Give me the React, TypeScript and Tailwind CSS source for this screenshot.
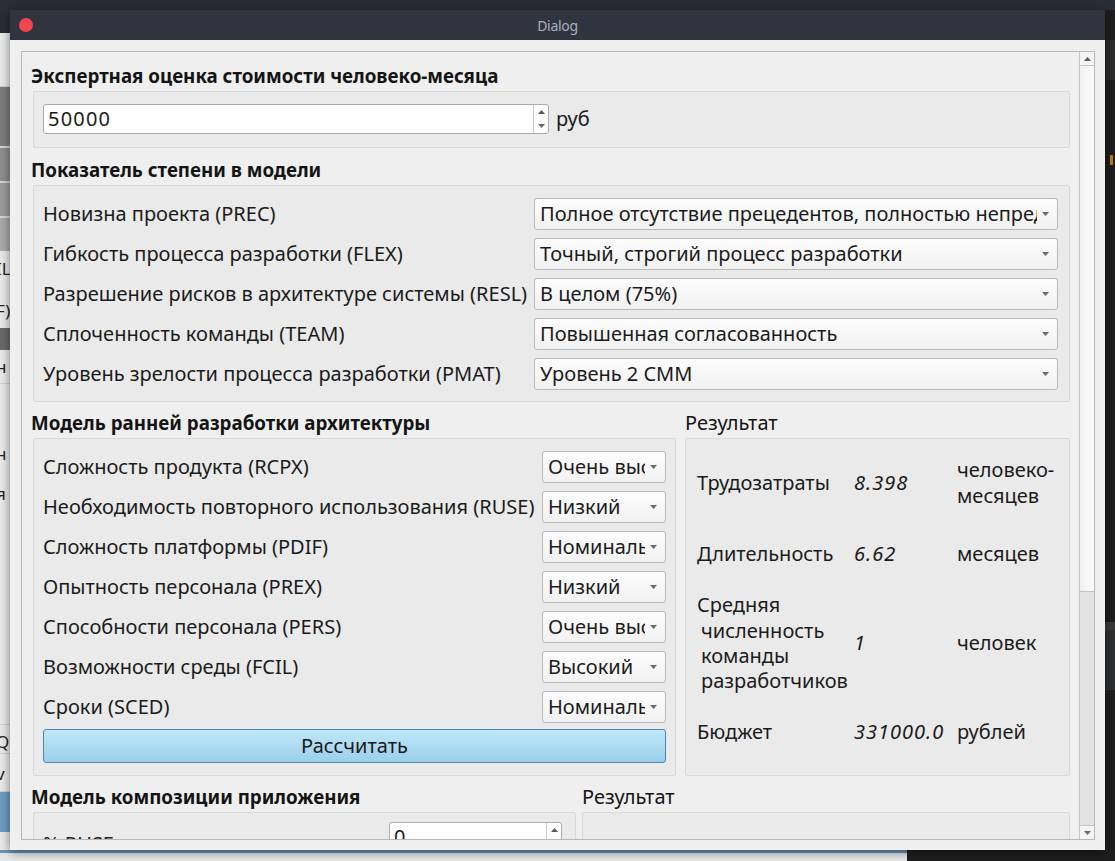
import React from "react";

const pmRows: [string, string][] = [
  ["Новизна проекта (PREC)", "Полное отсутствие прецедентов, полностью непредсказуемый проект"],
  ["Гибкость процесса разработки (FLEX)", "Точный, строгий процесс разработки"],
  ["Разрешение рисков в архитектуре системы (RESL)", "В целом (75%)"],
  ["Сплоченность команды (TEAM)", "Повышенная согласованность"],
  ["Уровень зрелости процесса разработки (PMAT)", "Уровень 2 CMM"],
];

const earlyRows: [string, string][] = [
  ["Сложность продукта (RCPX)", "Очень высокий"],
  ["Необходимость повторного использования (RUSE)", "Низкий"],
  ["Сложность платформы (PDIF)", "Номинальный"],
  ["Опытность персонала (PREX)", "Низкий"],
  ["Способности персонала (PERS)", "Очень высокий"],
  ["Возможности среды (FCIL)", "Высокий"],
  ["Сроки (SCED)", "Номинальный"],
];

function Arrow({ up = false, className = "" }: { up?: boolean; className?: string }) {
  return (
    <svg width="7" height="4" viewBox="0 0 7 4" className={className}>
      {up ? <path d="M0 4 L3.5 0 L7 4 Z" fill="#5a5a5a" /> : <path d="M0 0 L7 0 L3.5 4 Z" fill="#6a6a6a" />}
    </svg>
  );
}

function Combo({ value, className = "" }: { value: string; className?: string }) {
  return (
    <div
      className={`h-[32px] min-w-0 flex items-center border border-[#b9b9b9] rounded-[3px] bg-gradient-to-b from-[#fdfdfd] to-[#f1f1f1] pl-[5px] pr-[8px] ${className}`}
    >
      <span className="flex-1 min-w-0 overflow-hidden whitespace-nowrap text-[#1b1b1b]">{value}</span>
      <Arrow className="ml-[5px] shrink-0" />
    </div>
  );
}

function SpinBox({ value, className = "" }: { value: string; className?: string }) {
  return (
    <div className={`flex border border-[#ababab] rounded-[3px] bg-white ${className}`}>
      <div className="flex-1 flex items-center pl-[4px] text-[#1b1b1b] tracking-[1.2px]">{value}</div>
      <div className="w-[15px] border-l border-[#c9c9c9] flex flex-col">
        <div className="flex-1 flex items-center justify-center">
          <Arrow up />
        </div>
        <div className="flex-1 flex items-center justify-center">
          <Arrow />
        </div>
      </div>
    </div>
  );
}

function Header({ children, bold = true }: { children: React.ReactNode; bold?: boolean }) {
  return (
    <div
      className={`h-[24px] leading-[24px] -ml-[2px] text-[#141414] whitespace-nowrap ${bold ? "font-bold text-[18.75px]" : ""}`}
    >
      {children}
    </div>
  );
}

export default function App() {
  return (
    <div className="relative w-[1115px] h-[861px] overflow-hidden bg-[#1e1e1e] font-['Noto_Sans',sans-serif] text-[20px]">
      {/* desktop behind the dialog */}
      <div className="absolute left-0 top-0 w-[1115px] h-[10px] bg-[#2b2e36]" />
      <div className="absolute left-0 top-[10px] w-[10px] h-[840px] bg-[#ebebeb] overflow-hidden text-[17px] text-[#222]">
        <div className="h-[23px] bg-[#2b2e36]" />
        <div className="h-[54px] border-b border-[#cfcfcf]" />
        <div className="h-[61px] bg-[#7f7f7f] border-b-2 border-[#d8d8d8]" />
        <div className="h-[35px] bg-[#8e8e8e] border-b-2 border-[#d8d8d8]" />
        <div className="h-[35px] bg-[#9c9c9c] border-b-2 border-[#d8d8d8]" />
        <div className="h-[33px] bg-[#ababab]" />
        <div className="h-[42px] leading-[36px] -ml-[4px]">IL</div>
        <div className="h-[35px] leading-[35px] -ml-[4px]">F)</div>
        <div className="h-[22px] bg-[#6a6a6a]" />
        <div className="h-[34px] leading-[34px] -ml-[4px] border-b border-[#cfcfcf]">н</div>
        <div className="h-[70px] leading-[140px] -ml-[4px]">н</div>
        <div className="h-[80px] leading-[80px] -ml-[4px]">я</div>
        <div className="h-[190px]" />
        <div className="h-[30px] leading-[34px] -ml-[4px] border-t border-b border-[#cfcfcf]">Q</div>
        <div className="h-[38px] leading-[40px] -ml-[4px] border-b border-[#cfcfcf]">v</div>
        <div className="h-[40px] bg-[#6f9fc2]" />
      </div>
      <div className="absolute left-0 top-[850px] w-[907px] h-[11px] bg-[#e9e9e9] border-t-[3px] border-[#6a98b9]" />
      <div className="absolute left-[1105px] top-[40px] w-[10px] h-[40px] bg-[#2d2d2d]" />
      <div className="absolute left-[1110px] top-[155px] w-[3px] h-[10px] bg-[#c77a1c]" />
      <div className="absolute left-[1105px] top-[622px] w-[10px] h-[68px] bg-[#2e2f31] border-t-[8px] border-[#3a3a3a]" />

      {/* dialog window */}
      <div className="absolute left-[10px] top-[10px] w-[1095px] h-[840px] flex flex-col bg-[#efefef] shadow-[0_2px_10px_rgba(0,0,0,0.5)]">
        <div className="relative h-[30px] shrink-0 bg-[#2f343f] flex items-center justify-center">
          <span className="absolute left-[9px] top-[8px] w-[14px] h-[14px] rounded-full bg-[#f0474f]" />
          <span className="text-[14px] text-[#a9b1be] tracking-[-0.3px]">Dialog</span>
        </div>

        <div className="flex-1 min-h-0 pl-[11px] pr-[10px] pt-[11px] pb-[10px]">
          <div className="h-full border border-[#b7b7b7] flex overflow-hidden">
            {/* scroll content */}
            <div className="flex-1 min-w-0 overflow-hidden pl-[11px] pr-[9px] pt-[12px]">
              <Header>Экспертная оценка стоимости человеко-месяца</Header>
              <div className="mt-[3px] border border-[#d9d9d9] rounded-[2px] bg-[#eaeaea] pl-[9px] pt-[12px] pb-[13px] flex items-center">
                <SpinBox value="50000" className="w-[506px] h-[30px]" />
                <span className="ml-[7px] text-[#1b1b1b]">руб</span>
              </div>

              <div className="mt-[10px]">
                <Header>Показатель степени в модели</Header>
              </div>
              <div className="mt-[3px] border border-[#d9d9d9] rounded-[2px] bg-[#eaeaea] pl-[9px] pr-[11px] pt-[12px] pb-[11px] flex flex-col gap-[8px]">
                {pmRows.map(([label, value]) => (
                  <div key={label} className="flex items-center">
                    <span className="w-[491px] shrink-0 text-[#1b1b1b] whitespace-nowrap">{label}</span>
                    <Combo value={value} className="flex-1" />
                  </div>
                ))}
              </div>

              <div className="mt-[9px] flex gap-[9px]">
                <div className="w-[643px] shrink-0">
                  <Header>Модель ранней разработки архитектуры</Header>
                  <div className="mt-[3px] border border-[#d9d9d9] rounded-[2px] bg-[#eaeaea] pl-[9px] pr-[9px] pt-[12px] pb-[12px]">
                    <div className="flex flex-col gap-[8px]">
                      {earlyRows.map(([label, value]) => (
                        <div key={label} className="flex items-center">
                          <span className="flex-1 text-[#1b1b1b] whitespace-nowrap">{label}</span>
                          <Combo value={value} className="w-[124px] shrink-0" />
                        </div>
                      ))}
                    </div>
                    <button className="mt-[6px] w-full h-[34px] rounded-[3px] border border-[#4a88b2] bg-gradient-to-b from-[#bfe8fa] to-[#9bcfe9] text-[#1b1b1b]">
                      Рассчитать
                    </button>
                  </div>
                </div>
                <div className="flex-1 min-w-0">
                  <Header bold={false}>
                    <span className="ml-[2px]">Результат</span>
                  </Header>
                  <div className="mt-[3px] h-[338px] border border-[#d9d9d9] rounded-[2px] bg-[#eaeaea] pl-[11px] pt-[5px] text-[#1b1b1b]">
                    <div className="h-[78px] flex items-center">
                      <span className="w-[157px]">Трудозатраты</span>
                      <span className="w-[103px] italic tracking-[1px]">8.398</span>
                      <span className="leading-[26px]">
                        человеко-
                        <br />
                        месяцев
                      </span>
                    </div>
                    <div className="h-[64px] flex items-center">
                      <span className="w-[157px]">Длительность</span>
                      <span className="w-[103px] italic tracking-[1px]">6.62</span>
                      <span>месяцев</span>
                    </div>
                    <div className="h-[114px] flex items-center">
                      <span className="w-[157px] leading-[25.3px] whitespace-nowrap">
                        Средняя
                        <br />
                        <span className="pl-[4px]">численность</span>
                        <br />
                        <span className="pl-[4px]">команды</span>
                        <br />
                        <span className="pl-[4px]">разработчиков</span>
                      </span>
                      <span className="w-[103px] italic tracking-[1px]">1</span>
                      <span>человек</span>
                    </div>
                    <div className="h-[64px] flex items-center">
                      <span className="w-[157px]">Бюджет</span>
                      <span className="w-[103px] italic tracking-[1px]">331000.0</span>
                      <span>рублей</span>
                    </div>
                  </div>
                </div>
              </div>

              <div className="mt-[9px] flex gap-[6px]">
                <div className="w-[543px] shrink-0">
                  <Header>Модель композиции приложения</Header>
                  <div className="mt-[3px] border border-[#d9d9d9] rounded-[2px] bg-[#eaeaea] pl-[9px] pr-[13px] pt-[9px] pb-[10px] flex items-start">
                    <span className="flex-1 pt-[7px] text-[#1b1b1b]">% RUSE</span>
                    <SpinBox value="0" className="w-[173px] h-[30px]" />
                  </div>
                </div>
                <div className="flex-1 min-w-0">
                  <Header bold={false}>
                    <span className="ml-[2px]">Результат</span>
                  </Header>
                  <div className="mt-[3px] h-[60px] border border-[#d9d9d9] rounded-[2px] bg-[#eaeaea]" />
                </div>
              </div>
            </div>

            {/* vertical scrollbar */}
            <div className="w-[15px] shrink-0 border-l border-[#c4c4c4] flex flex-col bg-[#e3e3e3]">
              <div className="h-[14px] bg-[#f4f4f4] border-b border-[#c4c4c4] flex items-center justify-center">
                <Arrow up />
              </div>
              <div className="h-[526px] bg-gradient-to-r from-[#f2f2f2] to-[#fbfbfb] border-b border-[#c4c4c4]" />
              <div className="flex-1" />
              <div className="h-[14px] bg-[#f4f4f4] border-t border-[#c4c4c4] flex items-center justify-center">
                <Arrow />
              </div>
            </div>
          </div>
        </div>
      </div>
    </div>
  );
}
